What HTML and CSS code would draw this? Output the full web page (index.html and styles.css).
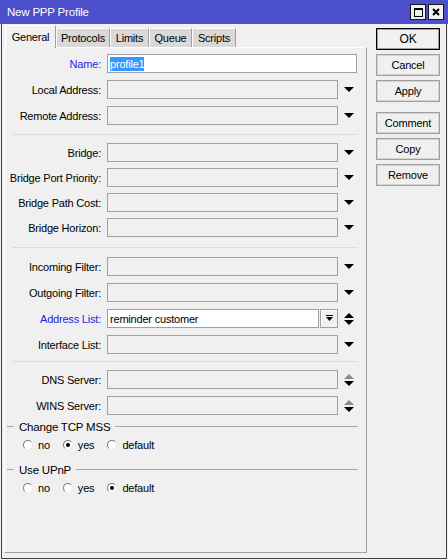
FILE: index.html
```html
<!DOCTYPE html>
<html>
	<head>
		<meta charset="utf-8">
		<title>New PPP Profile</title>
		<link rel="stylesheet" href="styles.css">
	</head>
	<body>
		<!-- 窗口 -->
		<div class="window">
			<!-- 标题栏 -->
			<div class="titlebar">
				<span class="title">New PPP Profile</span>
				<span class="tb-btn">
					<svg width="9" height="9" viewBox="0 0 9 9"><rect x="0" y="0" width="9" height="2" fill="#000"/><rect x="0.5" y="0.5" width="8" height="8" fill="none" stroke="#000"/></svg>
				</span>
				<span class="tb-btn">
					<svg width="8" height="8" viewBox="0 0 8 8"><path d="M1 1L7 7M7 1L1 7" stroke="#000" stroke-width="2"/></svg>
				</span>
			</div>

			<div class="client">
				<div class="main">
					<!-- 选项卡 -->
					<div class="tabs">
						<span class="tab active w-general">General</span>
						<span class="tab w-protocols">Protocols</span>
						<span class="tab w-limits">Limits</span>
						<span class="tab w-queue">Queue</span>
						<span class="tab w-scripts">Scripts</span>
					</div>

					<div class="panel">
						<div class="section">
							<div class="row">
								<span class="label blue">Name:</span>
								<div class="field on wide"><span class="sel">profile1</span></div>
							</div>
							<div class="row">
								<span class="label">Local Address:</span>
								<div class="field"></div>
								<svg class="arrow" width="10" height="5" viewBox="0 0 10 5"><path d="M0 0h10L5 5z"/></svg>
							</div>
							<div class="row">
								<span class="label">Remote Address:</span>
								<div class="field"></div>
								<svg class="arrow" width="10" height="5" viewBox="0 0 10 5"><path d="M0 0h10L5 5z"/></svg>
							</div>
						</div>

						<div class="sep"></div>

						<div class="section tight">
							<div class="row">
								<span class="label">Bridge:</span>
								<div class="field"></div>
								<svg class="arrow" width="10" height="5" viewBox="0 0 10 5"><path d="M0 0h10L5 5z"/></svg>
							</div>
							<div class="row">
								<span class="label">Bridge Port Priority:</span>
								<div class="field"></div>
								<svg class="arrow" width="10" height="5" viewBox="0 0 10 5"><path d="M0 0h10L5 5z"/></svg>
							</div>
							<div class="row">
								<span class="label">Bridge Path Cost:</span>
								<div class="field"></div>
								<svg class="arrow" width="10" height="5" viewBox="0 0 10 5"><path d="M0 0h10L5 5z"/></svg>
							</div>
							<div class="row">
								<span class="label">Bridge Horizon:</span>
								<div class="field"></div>
								<svg class="arrow" width="10" height="5" viewBox="0 0 10 5"><path d="M0 0h10L5 5z"/></svg>
							</div>
						</div>

						<div class="sep sep2"></div>

						<div class="section">
							<div class="row">
								<span class="label">Incoming Filter:</span>
								<div class="field"></div>
								<svg class="arrow" width="10" height="5" viewBox="0 0 10 5"><path d="M0 0h10L5 5z"/></svg>
							</div>
							<div class="row">
								<span class="label">Outgoing Filter:</span>
								<div class="field"></div>
								<svg class="arrow" width="10" height="5" viewBox="0 0 10 5"><path d="M0 0h10L5 5z"/></svg>
							</div>
							<div class="row">
								<span class="label blue">Address List:</span>
								<div class="combo">
									<div class="field on">reminder customer</div>
									<span class="mini-btn">
										<svg width="7" height="7" viewBox="0 0 7 7"><rect x="0" y="0" width="7" height="1" fill="#000"/><path d="M0 2h7L3.5 6z"/></svg>
									</span>
								</div>
								<svg class="arrow" width="10" height="12" viewBox="0 0 10 12"><path d="M5 0l5 5H0z"/><path d="M0 7h10l-5 5z"/></svg>
							</div>
							<div class="row">
								<span class="label">Interface List:</span>
								<div class="field"></div>
								<svg class="arrow" width="10" height="5" viewBox="0 0 10 5"><path d="M0 0h10L5 5z"/></svg>
							</div>
						</div>

						<div class="sep sep3"></div>

						<div class="section">
							<div class="row">
								<span class="label">DNS Server:</span>
								<div class="field"></div>
								<svg class="arrow" width="10" height="12" viewBox="0 0 10 12"><path class="dim" d="M5 0l5 5H0z"/><path d="M0 7h10l-5 5z"/></svg>
							</div>
							<div class="row">
								<span class="label">WINS Server:</span>
								<div class="field"></div>
								<svg class="arrow" width="10" height="12" viewBox="0 0 10 12"><path class="dim" d="M5 0l5 5H0z"/><path d="M0 7h10l-5 5z"/></svg>
							</div>
						</div>

						<!-- 单选组 -->
						<div class="group-head"><span>Change TCP MSS</span></div>
						<div class="radios">
							<span class="opt"><i class="radio"></i>no</span>
							<span class="opt"><i class="radio checked"></i>yes</span>
							<span class="opt"><i class="radio"></i>default</span>
						</div>

						<div class="group-head second"><span>Use UPnP</span></div>
						<div class="radios">
							<span class="opt"><i class="radio"></i>no</span>
							<span class="opt"><i class="radio"></i>yes</span>
							<span class="opt"><i class="radio checked"></i>default</span>
						</div>
					</div>
				</div>

				<!-- 右侧按钮 -->
				<div class="buttons">
					<span class="btn default">OK</span>
					<span class="btn">Cancel</span>
					<span class="btn">Apply</span>
					<span class="btn spaced">Comment</span>
					<span class="btn">Copy</span>
					<span class="btn">Remove</span>
				</div>
			</div>
		</div>
	</body>
</html>
```

FILE: styles.css
```css
*{
	margin: 0;
	padding: 0;
	box-sizing: border-box;
}

body{
	background-color: #f0f0f0;
	font-family: "Liberation Sans", Arial, sans-serif;
	font-size: 11px;
	letter-spacing: -0.2px;
	color: #000;
}

.window{
	width: 448px;
	height: 560px;
	display: flex;
	flex-direction: column;
}

/* 标题栏 */
.titlebar{
	height: 24px;
	flex: none;
	background-color: #4b4fc9;
	color: #fff;
	display: flex;
	align-items: center;
	padding: 0 4px 0 7px;
}

.title{
	flex: 1;
	font-size: 11.5px;
}

.tb-btn{
	width: 16px;
	height: 16px;
	margin-left: 2px;
	background-color: #f0f0f0;
	border: 1px solid #1a1a1a;
	display: flex;
	align-items: center;
	justify-content: center;
}

.client{
	flex: 1;
	display: flex;
	margin: 0 1px 1px;
	border: 1px solid #404040;
	border-top: 0;
	padding: 1px 6px 5px 2px;
}

.main{
	width: 363px;
	display: flex;
	flex-direction: column;
}

/* 选项卡 */
.tabs{
	height: 22px;
	display: flex;
	align-items: flex-end;
	padding-left: 1px;
}

.tab{
	height: 19px;
	display: flex;
	align-items: center;
	justify-content: center;
	background-color: #d9d9d9;
	border-top: 1px solid #fff;
	border-left: 1px solid #fff;
	border-right: 1px solid #a0a0a0;
}

.tab.active{
	height: 23px;
	margin-bottom: -1px;
	background-color: #f0f0f0;
	position: relative;
	z-index: 1;
}

.w-general{ width: 51px; }
.w-protocols{ width: 54px; }
.w-limits{ width: 39px; }
.w-queue{ width: 43px; }
.w-scripts{ width: 44px; }

.panel{
	height: 506px;
	border: 1px solid;
	border-color: #fff #a0a0a0 #a0a0a0 #fff;
	padding-top: 6px;
}

.section{
	display: flex;
	flex-direction: column;
	gap: 7px;
}

.section.tight{
	gap: 6px;
}

.row{
	height: 19px;
	display: grid;
	grid-template-columns: 102px 231px 22px;
	align-items: center;
}

.label{
	text-align: right;
	padding-right: 6px;
	white-space: nowrap;
}

.blue{
	color: #2424e6;
}

.field{
	height: 19px;
	border: 1px solid #a0a0a0;
	background-color: #f0f0f0;
	padding-left: 2px;
	display: flex;
	align-items: center;
	white-space: nowrap;
}

.field.on{
	background-color: #fff;
}

.field.wide{
	grid-column: span 2;
	width: 250px;
}

.sel{
	background-color: #3399ff;
	color: #fff;
	padding: 1px 0;
}

.combo{
	display: flex;
	gap: 1px;
}

.combo .field{
	flex: 1;
}

.mini-btn{
	width: 18px;
	height: 19px;
	border: 1px solid #a0a0a0;
	box-shadow: inset 1px 1px 0 #fff;
	display: flex;
	align-items: center;
	justify-content: center;
}

.arrow{
	justify-self: center;
	fill: #000;
}

.arrow .dim{
	fill: #8c8c8c;
}

/* 分隔线 */
.sep{
	height: 1px;
	background-color: #dcdcdc;
	margin: 9px 8px 8px 7px;
}

.sep2{
	margin-top: 10px;
	margin-bottom: 9px;
}

.sep3{
	margin-top: 7px;
	margin-bottom: 8px;
}

/* 单选组 */
.group-head{
	height: 13px;
	margin: 5px 8px 0 2px;
	display: flex;
	align-items: center;
}

.group-head::before,
.group-head::after{
	content: "";
	height: 1px;
	background-color: #a8a8a8;
}

.group-head::before{
	width: 7px;
}

.group-head::after{
	flex: 1;
}

.group-head span{
	padding: 0 5px;
	font-size: 11.5px;
}

.group-head.second{
	margin-top: 12px;
}

.radios{
	height: 13px;
	margin-top: 5px;
	padding-left: 18px;
	display: flex;
	align-items: center;
}

.opt{
	display: flex;
	align-items: center;
	margin-right: 13px;
}

.radio{
	width: 10px;
	height: 10px;
	margin-right: 5px;
	border-radius: 50%;
	border: 1px solid;
	border-color: #7a7a7a #e8e8e8 #e8e8e8 #7a7a7a;
	background-color: #fff;
	display: flex;
	align-items: center;
	justify-content: center;
}

.radio.checked::after{
	content: "";
	width: 4px;
	height: 4px;
	border-radius: 50%;
	background-color: #000;
}

/* 按钮 */
.buttons{
	width: 64px;
	margin-left: 9px;
	padding-top: 3px;
	display: flex;
	flex-direction: column;
	gap: 4px;
}

.btn{
	height: 22px;
	display: flex;
	align-items: center;
	justify-content: center;
	border: 1px solid #a0a0a0;
	box-shadow: inset 0 0 0 1px #d4d4d4;
}

.btn.default{
	border-color: #000;
	box-shadow: inset 0 0 0 1px #a0a0a0;
	font-size: 12px;
}

.btn.spaced{
	margin-top: 6px;
}
```
